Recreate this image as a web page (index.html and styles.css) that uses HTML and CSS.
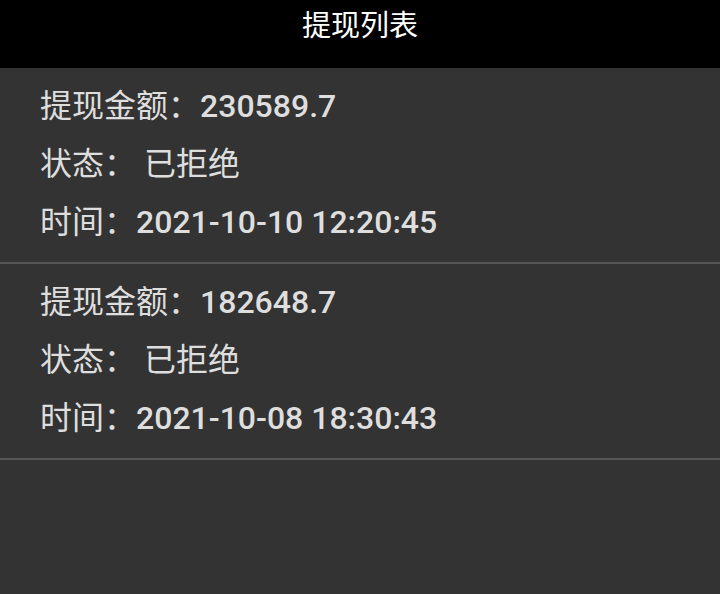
FILE: index.html
```html
<!DOCTYPE html>
<html lang="zh-CN">
<head>
<meta charset="utf-8">
<title>提现列表</title>
<link rel="stylesheet" href="styles.css">
</head>
<body>
<header class="topbar">提现列表</header>
<main class="list">
  <section class="card">
    <div class="row">提现金额：<span class="num">230589.7</span></div>
    <div class="row">状态： 已拒绝</div>
    <div class="row">时间：<span class="num">2021-10-10 12:20:45</span></div>
  </section>
  <section class="card">
    <div class="row">提现金额：<span class="num">182648.7</span></div>
    <div class="row">状态： 已拒绝</div>
    <div class="row">时间：<span class="num">2021-10-08 18:30:43</span></div>
  </section>
</main>
</body>
</html>
```
FILE: styles.css
```css
html, body {
  margin: 0;
  padding: 0;
  height: 100%;
}
body {
  background: #333333;
  font-family: Roboto, "Noto Sans CJK SC", sans-serif;
  color: #dedede;
}
.topbar {
  height: 68px;
  background: #000000;
  color: #ffffff;
  font-size: 29px;
  line-height: 52px;
  text-align: center;
}
.card {
  padding: 9px 0 11px 40px;
  border-bottom: 2px solid #555555;
}
.row {
  height: 58px;
  line-height: 58px;
  font-size: 32px;
  white-space: nowrap;
}
.num {
  font-weight: 500;
}
```
